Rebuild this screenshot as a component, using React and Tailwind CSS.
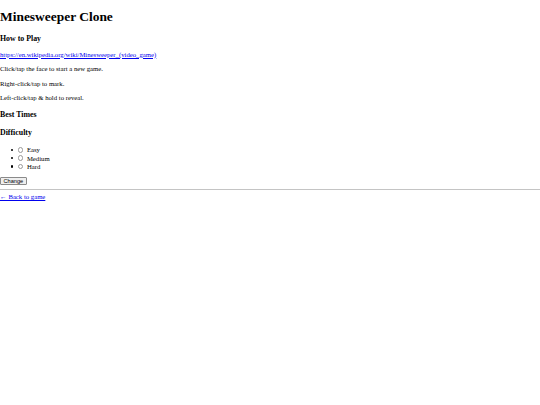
export default function App() {
  const levels = ["Easy", "Medium", "Hard"];

  return (
    <div className="font-['Liberation_Serif',serif] text-[6.72px] leading-[normal] text-black bg-white min-h-screen">
      <h1 className="text-[13.44px] font-bold my-[9px]">Minesweeper Clone</h1>

      <h3 className="text-[7.86px] leading-[10px] font-bold mt-[7.86px] mb-[6px]">How to Play</h3>
      <p className="my-[6.72px] leading-[7.8px]">
        <a href="#" className="text-[#0000ee] underline">
          https://en.wikipedia.org/wiki/Minesweeper_(video_game)
        </a>
      </p>
      <p className="my-[6.72px] leading-[7.8px]">Click/tap the face to start a new game.</p>
      <p className="my-[6.72px] leading-[7.8px]">Right-click/tap to mark.</p>
      <p className="my-[6.72px] leading-[7.8px]">Left-click/tap &amp; hold to reveal.</p>

      <h3 className="text-[7.86px] leading-[10px] font-bold my-[7.86px]">Best Times</h3>

      <form onSubmit={(e) => e.preventDefault()}>
        <h3 className="text-[7.86px] leading-[10px] font-bold my-[7.86px]">Difficulty</h3>
        <ul className="mt-[6.72px] mb-[5.7px]">
          {levels.map((level) => (
            <li key={level} className="flex items-center h-[8.4px] pl-[11px]">
              <span className="inline-block w-[2.4px] h-[2.4px] rounded-full bg-black" />
              <label className="flex items-center">
                <input
                  type="radio"
                  name="difficulty"
                  value={level.toLowerCase()}
                  className="appearance-none inline-block w-[5.5px] h-[5.5px] rounded-full border-[0.5px] border-[#9a9a9a] bg-white ml-[4.6px] mr-[3.4px]"
                />
                {level}
              </label>
            </li>
          ))}
        </ul>
        <button
          type="submit"
          className="font-['Liberation_Sans',sans-serif] text-[5.6px] leading-[normal] px-[2.52px] py-[0.42px] border-[0.5px] border-[#8a8a8a] bg-[#efefef] rounded-[1px]"
        >
          Change
        </button>
      </form>

      <hr className="my-[3.36px] border-t border-[#c4c4c4]" />
      <a href="#" className="text-[#0000ee] underline">
        ← Back to game
      </a>
    </div>
  );
}
